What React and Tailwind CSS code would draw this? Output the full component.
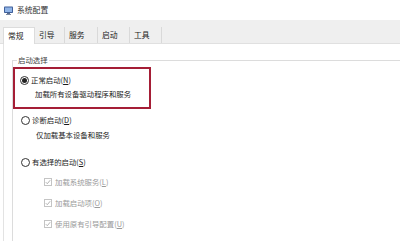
import React from 'react';

function Radio({ checked }) {
    return (
        <span className="w-[9px] h-[9px] rounded-full border border-[#333] flex items-center justify-center shrink-0 bg-white">
            {checked && <span className="w-[5px] h-[5px] rounded-full bg-[#222]" />}
        </span>
    );
}

function Check() {
    return (
        <span className="w-[8px] h-[8px] border border-[#c4c4c4] flex items-center justify-center shrink-0 bg-white">
            <svg width="6" height="6" viewBox="0 0 6 6">
                <path d="M0.8 3.2 L2.3 4.7 L5.2 1.2" fill="none" stroke="#a8a8a8" strokeWidth="0.9" />
            </svg>
        </span>
    );
}

function Label({ text, keyChar }) {
    return (
        <span>
            {text}(<span className="underline underline-offset-1">{keyChar}</span>)
        </span>
    );
}

const tabs = [
    { name: '常规', w: 'w-[32px]', active: true },
    { name: '引导', w: 'w-[30px]' },
    { name: '服务', w: 'w-[33px]' },
    { name: '启动', w: 'w-[32px]' },
    { name: '工具', w: 'w-[32px]' },
];

const checks = [
    { text: '加载系统服务', key: 'L', mt: 'mt-[8px]' },
    { text: '加载启动项', key: 'O', mt: 'mt-[9px]' },
    { text: '使用原有引导配置', key: 'U', mt: 'mt-[9px]' },
];

export default function App() {
    return (
        <div
            className="w-[400px] h-[241px] bg-white overflow-hidden text-[7.4px] leading-[12px] text-[#1a1a1a]"
            style={{ fontFamily: '"Noto Sans CJK SC", "Noto Sans", sans-serif' }}
        >
            {/* 标题栏 */}
            <div className="h-[20px] flex items-center pl-[4px] gap-[4px]">
                <svg width="9" height="9" viewBox="0 0 9 9">
                    <rect x="0" y="0.5" width="9" height="6.5" rx="0.8" fill="#3f5f9a" />
                    <rect x="1" y="1.5" width="7" height="4.5" fill="#8fb3e6" />
                    <rect x="3" y="7" width="3" height="1" fill="#5a6c8a" />
                    <rect x="2" y="8" width="5" height="1" fill="#7d8aa3" />
                </svg>
                <span className="text-[#333] text-[7.8px]">系统配置</span>
            </div>

            {/* 选项卡 */}
            <div className="h-[24px] bg-[#efefef] border-b border-[#e0e0e0] flex items-end pl-[3px] text-[7.8px]">
                {tabs.map(t => (
                    <div
                        key={t.name}
                        className={`${t.w} flex items-center pl-[4px] ${
                            t.active
                                ? 'h-[17px] bg-white -mb-px border-l border-r border-t border-[#dcdcdc]'
                                : 'h-[16px] border-r border-[#d9d9d9]'
                        }`}
                    >
                        {t.name}
                    </div>
                ))}
            </div>

            {/* 内容 */}
            <div className="ml-[3px] h-[200px] border-l border-[#e3e3e3] pl-[8px] pt-[10px]">
                <fieldset className="border-t border-l border-[#dcdcdc] w-[420px] h-[200px]">
                    <legend className="ml-[4px] px-[1px] text-[#444]">启动选择</legend>

                    <div className="w-[138px] h-[42px] border-2 border-[#a51e36] mt-[1px] pl-[5px] pt-[5px]">
                        <div className="flex items-center gap-[2px]">
                            <Radio checked />
                            <Label text="正常启动" keyChar="N" />
                        </div>
                        <div className="pl-[15px] mt-[2px]">加载所有设备驱动程序和服务</div>
                    </div>

                    <div className="pl-[8px] mt-[5px] flex items-center gap-[2px]">
                        <Radio />
                        <Label text="诊断启动" keyChar="D" />
                    </div>
                    <div className="pl-[23px] mt-[3px]">仅加载基本设备和服务</div>

                    <div className="pl-[8px] mt-[15px] flex items-center gap-[2px]">
                        <Radio />
                        <Label text="有选择的启动" keyChar="S" />
                    </div>

                    {checks.map(c => (
                        <div key={c.key} className={`${c.mt} pl-[31px] flex items-center gap-[3px] text-[#9a9a9a]`}>
                            <Check />
                            <Label text={c.text} keyChar={c.key} />
                        </div>
                    ))}
                </fieldset>
            </div>
        </div>
    );
}
